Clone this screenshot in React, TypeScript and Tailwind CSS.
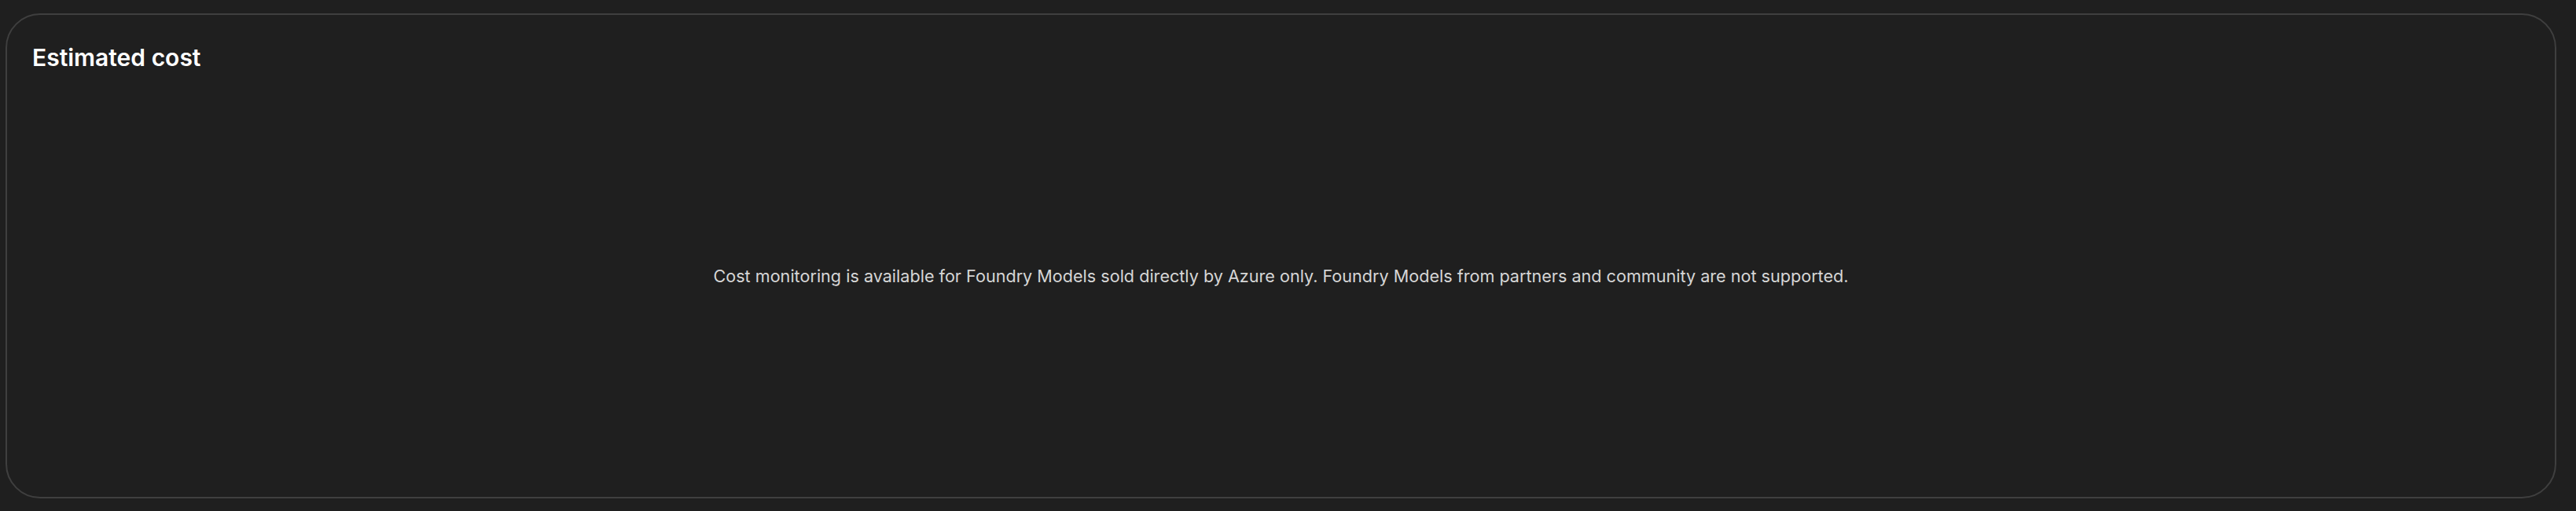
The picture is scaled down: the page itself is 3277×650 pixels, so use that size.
import React from "react";

export default function App() {
  return (
    <div className="w-full h-[650px] bg-[#1f1f1f] pt-[17px] pl-[7px] pr-[25px] pb-[16px]" style={{ fontFamily: "Inter, 'Noto Sans', sans-serif" }}>
      <div className="h-full rounded-[44px] border-2 border-[#3f3f3f] flex flex-col">
        <h2 className="px-[32px] pt-[35px] text-[30px] leading-[38px] font-semibold text-white">Estimated cost</h2>
        <div className="flex-1 flex items-center justify-center pb-[22px]">
          <p className="text-[21.6px] leading-[28px] text-[#d6d6d6]">
            Cost monitoring is available for Foundry Models sold directly by Azure only. Foundry Models from partners and community are not supported.
          </p>
        </div>
      </div>
    </div>
  );
}
